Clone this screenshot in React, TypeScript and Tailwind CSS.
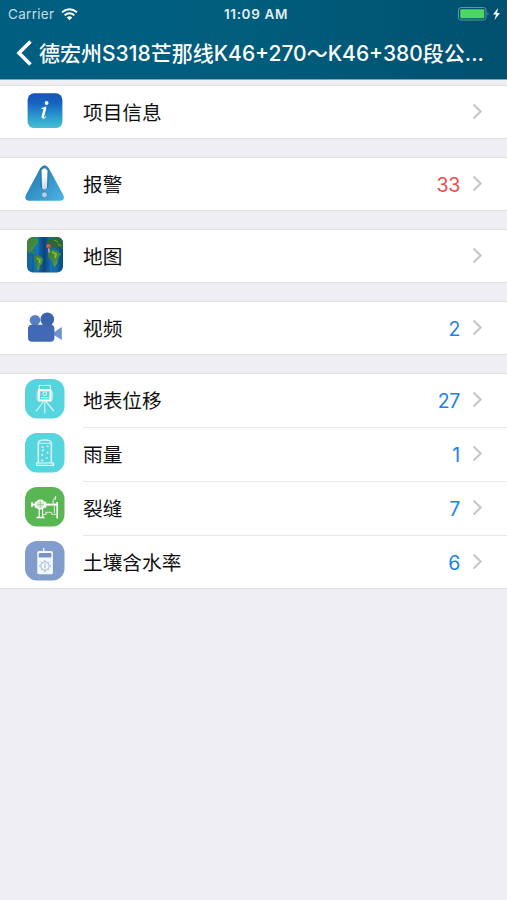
import React from 'react'

type RowProps = {
  icon: React.ReactNode
  label: string
  count?: number
  alert?: boolean
}

const InfoIcon = () => (
  <svg width="40" height="40" viewBox="0 0 40 40">
    <defs>
      <linearGradient id="info" x1="0" y1="0" x2="0" y2="1">
        <stop offset="0" stopColor="#1752b8" />
        <stop offset="0.3" stopColor="#1765c2" />
        <stop offset="0.75" stopColor="#2fa5d0" />
        <stop offset="1" stopColor="#48c0d4" />
      </linearGradient>
    </defs>
    <rect x="2.6" y="2.3" width="34.8" height="34.8" rx="6.5" fill="url(#info)" />
    <circle cx="21.6" cy="12" r="1.9" fill="#fff" />
    <path d="M16.5 17.6c1.6-.2 2.9-.7 4-1.3l-2.6 9.8c-.4 1.6.6 1.9 2.9-.4" fill="none" stroke="#f2fbff" strokeWidth="1.2" />
    <path d="M20.1 16.8 17.5 26.8" stroke="#fff" strokeWidth="2.5" />
  </svg>
)

const AlarmIcon = () => (
  <svg width="40" height="40" viewBox="0 0 40 40">
    <defs>
      <linearGradient id="alarm" x1="0" y1="0" x2="1" y2="1">
        <stop offset="0.15" stopColor="#277cae" />
        <stop offset="0.5" stopColor="#3293c9" />
        <stop offset="1" stopColor="#4db3e5" />
      </linearGradient>
      <linearGradient id="mark" x1="0" y1="0" x2="0" y2="1">
        <stop offset="0.3" stopColor="#fff" />
        <stop offset="1" stopColor="#c8d4df" />
      </linearGradient>
    </defs>
    <path d="M15.3 5Q19.5-.6 23.7 5L38 31.5Q40.8 37.4 35 37.7H4Q-1.5 37.4 1.2 31.5Z" fill="url(#alarm)" />
    <path d="M15.4 7Q19.4 2 23.4 7V24Q19.4 29.5 15.4 24Z" fill="#2276a9" />
    <path d="M16.5 7.4Q19.4 3.2 22.5 7.4L22 25Q19.4 28 17 25Z" fill="url(#mark)" />
    <circle cx="19.4" cy="31.8" r="2.9" fill="#b5cfdf" stroke="#2c80b3" strokeWidth=".6" />
  </svg>
)

const MapIcon = () => (
  <svg width="40" height="40" viewBox="0 0 40 40">
    <defs>
      <linearGradient id="sea">
        <stop offset="0" stopColor="#126496" />
        <stop offset="0.3" stopColor="#1475b8" />
        <stop offset="0.48" stopColor="#0d437b" />
        <stop offset="0.7" stopColor="#167abb" />
        <stop offset="1" stopColor="#0a4b83" />
      </linearGradient>
      <linearGradient id="land" x1="0" y1="0" x2="1" y2="1">
        <stop offset="0" stopColor="#4a7835" />
        <stop offset="0.5" stopColor="#3a8b3d" />
        <stop offset="1" stopColor="#86aa2d" />
      </linearGradient>
      <clipPath id="tile"><rect x="2" y="2" width="36" height="35.5" rx="6" /></clipPath>
    </defs>
    <g clipPath="url(#tile)">
      <rect x="2" y="2" width="36" height="36" fill="url(#sea)" />
      <path d="M8 3V37M15 2V37M28 2V38M35 2V38" stroke="#083d72" strokeWidth="1" opacity=".4" />
      <path d="M2 3 12 2 13.5 7 10 11 8 15 4 18 2 15Z" fill="url(#land)" />
      <path d="m5 14 4 3 1 3-4-3Z" fill="#55802a" />
      <path d="m9 21 5-.5 4 3-1 5-2 2-1 5-2-1-1-7-2-3Z" fill="url(#land)" />
      <path d="m12 23 3 2-1 3" fill="none" stroke="#93b83a" strokeWidth="1.5" />
      <path d="M22 6 27 3 34 2 38 3V15L35 12 32 14 29 12 26 14 22 12Z" fill="#286936" />
      <path d="m23 17 4-2.5 6 1.5 3 3-3 4-1 6-3 3-2-6-4-4Z" fill="url(#land)" />
      <path d="m27 17 4 2-1 4" fill="none" stroke="#93b83a" strokeWidth="1.8" />
      <path d="m29 5 4 2M33 9l3 2" stroke="#6f9638" strokeWidth="1.3" />
      <path d="m23.4 12 .8 5.5" stroke="#d9c6bb" strokeWidth="1.2" />
      <circle cx="23.5" cy="11.3" r="2.4" fill="#d34642" />
      <circle cx="23" cy="10.6" r=".7" fill="#eba7a0" />
    </g>
  </svg>
)

const VideoIcon = () => (
  <svg width="40" height="40" viewBox="0 0 40 40">
    <circle cx="10" cy="13.2" r="5.3" fill="#5580c3" />
    <path d="m28 26 8.8-6v13L28 27.5Z" fill="#6c93d0" />
    <rect x="3" y="17.8" width="26.4" height="17" rx="4" fill="#4169b5" />
    <circle cx="22.3" cy="12.4" r="6.8" fill="#3d63aa" />
  </svg>
)

const SurveyIcon = () => (
  <svg width="40" height="40" viewBox="0 0 40 40">
    <rect width="39.5" height="39.5" rx="12" fill="#56d5de" />
    <g fill="none" stroke="#fff">
      <path d="M14.2 10.5V6.5H25.3V10.5" strokeWidth="1.1" opacity=".85" />
      <path d="M14 11.2H25.5V21.5H14Z" strokeWidth="2.2" />
      <path d="M12.2 12.5v8M27.3 12.5v8" strokeWidth="1" opacity=".7" />
      <circle cx="19.8" cy="14.7" r="1.8" strokeWidth="1.1" opacity=".8" />
      <path d="M16 18.6h7.5" strokeWidth="1.2" opacity=".8" />
      <path d="M18.5 22.5 11 32.3M19.8 22.5v12M21 22.5l7.8 9.5" strokeWidth="1.2" opacity=".75" />
    </g>
  </svg>
)

const RainIcon = () => (
  <svg width="40" height="40" viewBox="0 0 40 40">
    <rect width="39.5" height="39.5" rx="12" fill="#56d5de" />
    <g fill="none" stroke="#e9fcfd">
      <path d="M13.3 30V10Q13.3 7 19.8 7T26.3 10V30" strokeWidth="1.6" opacity=".85" />
      <path d="M14 10.3h12" strokeWidth="1" opacity=".8" />
      <path d="M11.5 30h17v2.3h-17Z" strokeWidth="1.2" />
      <path d="m16.5 13.5 2 1.2m3.5-2 1.5 1.2m-6.5 4 2-1.2m3 2 1.2 1.8m-7 2 2-1.2m3 3 1.2 1.2m-6.2 1.3 2 1.2" strokeWidth="1.7" opacity=".8" />
    </g>
  </svg>
)

const CrackIcon = () => (
  <svg width="40" height="40" viewBox="0 0 40 40">
    <rect width="39.5" height="39.5" rx="12" fill="#59b653" />
    <g fill="none" stroke="#fff">
      <path d="M7 15v5" strokeWidth="1.6" />
      <path d="M7 17.6h25.5" strokeWidth="2" />
      <path d="M10.5 15.5h10v4.5h-10Z" strokeWidth="1.5" />
      <circle cx="15.3" cy="17.6" r="4.4" fill="#d7efd6" strokeWidth="1.2" />
      <path d="M15.3 14.5v6M12.5 17.6h6" stroke="#8fcd8b" strokeWidth=".9" />
      <path d="M14.2 22v8M17.6 22v8" strokeWidth="1.2" />
      <path d="M11.5 30.5h8" strokeWidth="1.5" />
      <path d="M18 27.5h3v-2.3h5l1 2h4" strokeWidth="1.1" opacity=".8" />
      <path d="M32.2 15v16.5" strokeWidth="1.7" />
      <path d="M27.8 14.5l1.5-3 1.5-2.5-.5 4M28.2 14v4M29.3 19v7" strokeWidth="1" opacity=".8" />
    </g>
  </svg>
)

const SoilIcon = () => (
  <svg width="40" height="40" viewBox="0 0 40 40">
    <rect width="39.5" height="39.5" rx="12" fill="#809dce" />
    <path d="M18.7 11V7" stroke="#eff4fc" strokeWidth="1.5" />
    <rect x="12.3" y="10" width="15.6" height="23.3" rx="1.5" fill="#f4f8ff" />
    <rect x="13.8" y="12" width="12.6" height="4.4" rx="1" fill="#7793c3" />
    <circle cx="20" cy="25" r="4.2" fill="none" stroke="#9aafd5" />
    <path d="M20 22.5v5M20 19v1M20 30v1.5M14 25h1M25 25h1M15.7 20.7l.8.8M23.5 28.5l.8.8M15.7 29.3l.8-.8M23.5 21.5l.8-.8" stroke="#9aafd5" />
  </svg>
)

const Row = ({ icon, label, count, alert = false }: RowProps) => (
  <div className="flex h-full items-start">
    <div className="mt-[5px] ml-[25px] w-[58px] shrink-0">{icon}</div>
    <span className="mt-[13px] text-[19.7px] leading-7 text-[#101010]">{label}</span>
    <span className={`mt-[13px] ml-auto text-[19.5px] leading-7 tracking-[-0.3px] ${alert ? 'text-[#ee4b49]' : 'text-[#237fe8]'}`}>
      {count}
    </span>
    <svg className="mt-[17px] mr-[24px] ml-3 shrink-0" width="11" height="17" viewBox="0 0 11 17">
      <path d="m1.5 1.5 7.2 7-7.2 7" fill="none" stroke="#c6c6ca" strokeWidth="2" />
    </svg>
  </div>
)

const singles: RowProps[] = [
  { icon: <InfoIcon />, label: '项目信息' },
  { icon: <AlarmIcon />, label: '报警', count: 33, alert: true },
  { icon: <MapIcon />, label: '地图' },
  { icon: <VideoIcon />, label: '视频', count: 2 },
]

const sensors: RowProps[] = [
  { icon: <SurveyIcon />, label: '地表位移', count: 27 },
  { icon: <RainIcon />, label: '雨量', count: 1 },
  { icon: <CrackIcon />, label: '裂缝', count: 7 },
  { icon: <SoilIcon />, label: '土壤含水率', count: 6 },
]

const Header = () => (
  <header className="h-20 border-b border-[#79aabd] bg-linear-to-r from-[#005e81] via-[#005d7c] to-[#00506f] text-white">
    <div className="grid h-7 grid-cols-3 items-center pr-[5px] pl-2 text-[13px]">
      <div className="flex items-center gap-[7px] text-[#c5dce5]">
        <span className="text-[13.5px] tracking-[0.3px]">Carrier</span>
        <svg width="17" height="13" viewBox="0 0 17 13">
          <path d="M1 4.3Q8.5-1.7 16 4.3M3.6 7.2Q8.5 3.4 13.4 7.2" fill="none" stroke="#fff" strokeWidth="2" />
          <path d="M5.7 9.4Q8.5 7.3 11.3 9.4L8.5 12.3Z" fill="#fff" />
        </svg>
      </div>
      <span className="pt-px pl-0.5 text-center text-[13.5px] font-semibold tracking-[0.65px] whitespace-nowrap text-[#e2eef2]">11:09 AM</span>
      <div className="flex items-center justify-end">
        <svg width="45" height="16" viewBox="0 0 45 16">
          <rect x="1.5" y="1.5" width="27.5" height="12.5" rx="2.5" fill="none" stroke="#5c96aa" />
          <rect x="3.3" y="3.3" width="24" height="9" rx="1" fill="#4cd95f" />
          <path d="M30.5 5.7q2 2 0 4Z" fill="#5c96aa" />
          <path d="m41 2-5 6.5h3L37.5 14l5.5-7h-3Z" fill="#fff" />
        </svg>
      </div>
    </div>
    <div className="flex h-[50px] items-center pl-4">
      <svg className="shrink-0" width="17" height="28" viewBox="0 0 17 28">
        <path d="M14.5 2.5 3 14l11.5 11.5" fill="none" stroke="#fff" strokeWidth="3.6" />
      </svg>
      <h1 className="ml-[6px] pt-px text-[21px] font-medium whitespace-nowrap">德宏州S318芒那线K46+270～K46+380段公...</h1>
    </div>
  </header>
)

export default function App() {
  return (
    <div className="h-[900px] w-[507px] overflow-hidden bg-[#eeeef3] font-[Inter,'Noto_Sans_CJK_SC',sans-serif]">
      <Header />
      <main className="flex flex-col gap-[18px] pt-[5px]">
        {singles.map((row) => (
          <section key={row.label} className="h-[54px] border-y border-[#e2e2e6] bg-white">
            <Row {...row} />
          </section>
        ))}
        <section className="border-y border-[#e2e2e6] bg-white">
          {sensors.map((row, i) => (
            <div key={row.label} className={i < 3 ? 'h-[54px]' : 'h-[52px]'}>
              <div className="h-[53px]">
                <Row {...row} />
              </div>
              {i < 3 && <div className="ml-[83px] h-px bg-[#e9e9ec]" />}
            </div>
          ))}
        </section>
      </main>
    </div>
  )
}
